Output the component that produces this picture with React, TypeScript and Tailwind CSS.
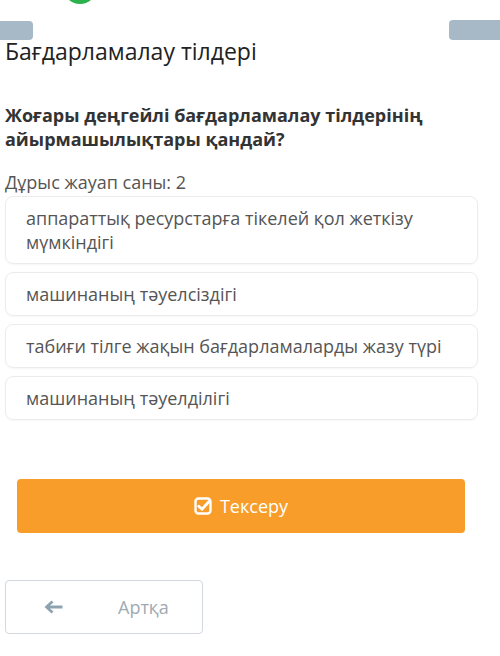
const options = [
    'аппараттық ресурстарға тікелей қол жеткізу мүмкіндігі',
    'машинаның тәуелсіздігі',
    'табиғи тілге жақын бағдарламаларды жазу түрі',
    'машинаның тәуелділігі',
];

export default function App() {
    return (
        <div className="w-[500px] h-[656px] bg-white overflow-hidden font-['Open_Sans',sans-serif]">
            {/* Top strip */}
            <div className="relative h-[40px] flex items-end justify-between">
                <div className="absolute left-[63px] -top-[30px] w-[34px] h-[34px] rounded-full bg-[#2bb24c]" />
                <div className="w-[33px] h-[19px] bg-[#a7b8c6] rounded-r-[4px]" />
                <div className="w-[51px] h-[20px] bg-[#a7b8c6] rounded-l-[4px]" />
            </div>

            <h1 className="pl-[5px] -mt-[3px] text-[23px] leading-[28px] text-[#222]">Бағдарламалау тілдері</h1>

            <p className="pl-[5px] pr-[40px] mt-[38px] text-[18px] leading-[24px] font-bold text-[#333]">
                Жоғары деңгейлі бағдарламалау тілдерінің айырмашылықтары қандай?
            </p>

            <p className="pl-[5px] mt-[19px] text-[18px] leading-[24px] text-[#555]">Дұрыс жауап саны: 2</p>

            <div className="ml-[5px] w-[473px] mt-[2px] flex flex-col gap-[8px]">
                {options.map(opt => (
                    <div
                        key={opt}
                        className="border border-[#ececec] rounded-[8px] pl-[20px] pr-[30px] py-[9px] text-[18px] leading-[24px] text-[#555] shadow-[0_1px_2px_rgba(0,0,0,0.04)]"
                    >
                        {opt}
                    </div>
                ))}
            </div>

            <div className="mt-[59px] ml-[17px] w-[448px] h-[54px] rounded-[4px] bg-[#f99d2a] flex items-center justify-center gap-[8px] text-white text-[18px]">
                {/* check-square */}
                <svg width="18" height="18" viewBox="0 0 18 18" fill="none">
                    <rect x="1.5" y="1.5" width="15" height="15" rx="3" stroke="white" strokeWidth="2.4" />
                    <path d="M4.8 9.2 L8 12.2 L15.5 4" stroke="white" strokeWidth="2.8" strokeLinecap="round" strokeLinejoin="round" />
                </svg>
                <span>Тексеру</span>
            </div>

            <div className="mt-[47px] ml-[5px] w-[198px] h-[54px] rounded-[4px] border border-[#d3d9de] flex items-center text-[#9faab2] text-[18px]">
                {/* arrow */}
                <svg className="ml-[38px]" width="19" height="14" viewBox="0 0 19 14">
                    <path d="M0.5 7 L7.5 0.5 L9.5 2.5 L6 5.4 L18.5 5.4 L18.5 8.6 L6 8.6 L9.5 11.5 L7.5 13.5 Z" fill="#8ea3b1" />
                </svg>
                <span className="ml-[55px]">Артқа</span>
            </div>
        </div>
    );
}
